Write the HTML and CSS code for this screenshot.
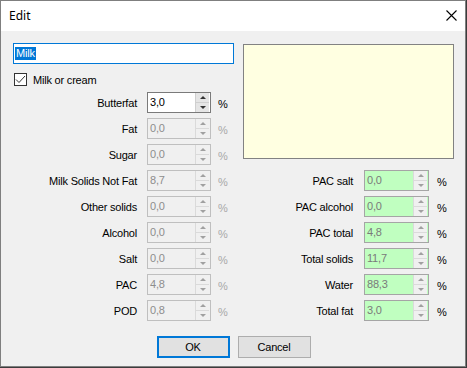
FILE: index.html
```html
<!DOCTYPE html>
<html>
<head>
<meta charset="utf-8">
<link rel="stylesheet" href="styles.css">
</head>
<body>
<div class="window">
  <div class="titlebar">
    <span class="title">Edit</span>
    <svg class="close" width="11" height="11" viewBox="0 0 11 11"><path d="M0.5 0.5 L10.5 10.5 M10.5 0.5 L0.5 10.5" stroke="#000" stroke-width="1.1" fill="none"/></svg>
  </div>
  <div class="content">
    <div class="columns">
      <div class="col-left">
        <div class="name-input"><span class="sel">Milk</span></div>
        <div class="check-row">
          <span class="checkbox"><svg width="11" height="11" viewBox="0 0 11 11"><path d="M1 5.5 L4 8.5 L10 2" stroke="#333" stroke-width="1" fill="none"/></svg></span>
          <span>Milk or cream</span>
        </div>
        <div class="rows">
          <div class="row"><span class="label">Butterfat</span><div class="spin enabled"><span class="val">3,0</span><span class="btns"><span class="up"><i></i></span><span class="down"><i></i></span></span></div><span class="pct">%</span></div>
          <div class="row"><span class="label">Fat</span><div class="spin disabled"><span class="val">0,0</span><span class="btns"><span class="up"><i></i></span><span class="down"><i></i></span></span></div><span class="pct dim">%</span></div>
          <div class="row"><span class="label">Sugar</span><div class="spin disabled"><span class="val">0,0</span><span class="btns"><span class="up"><i></i></span><span class="down"><i></i></span></span></div><span class="pct dim">%</span></div>
          <div class="row"><span class="label">Milk Solids Not Fat</span><div class="spin disabled"><span class="val">8,7</span><span class="btns"><span class="up"><i></i></span><span class="down"><i></i></span></span></div><span class="pct dim">%</span></div>
          <div class="row"><span class="label">Other solids</span><div class="spin disabled"><span class="val">0,0</span><span class="btns"><span class="up"><i></i></span><span class="down"><i></i></span></span></div><span class="pct dim">%</span></div>
          <div class="row"><span class="label">Alcohol</span><div class="spin disabled"><span class="val">0,0</span><span class="btns"><span class="up"><i></i></span><span class="down"><i></i></span></span></div><span class="pct dim">%</span></div>
          <div class="row"><span class="label">Salt</span><div class="spin disabled"><span class="val">0,0</span><span class="btns"><span class="up"><i></i></span><span class="down"><i></i></span></span></div><span class="pct dim">%</span></div>
          <div class="row"><span class="label">PAC</span><div class="spin disabled"><span class="val">4,8</span><span class="btns"><span class="up"><i></i></span><span class="down"><i></i></span></span></div><span class="pct dim">%</span></div>
          <div class="row"><span class="label">POD</span><div class="spin disabled"><span class="val">0,8</span><span class="btns"><span class="up"><i></i></span><span class="down"><i></i></span></span></div><span class="pct dim">%</span></div>
        </div>
      </div>
      <div class="col-right">
        <div class="notes"></div>
        <div class="rows">
          <div class="row"><span class="label">PAC salt</span><div class="spin green"><span class="val">0,0</span><span class="btns"><span class="up"><i></i></span><span class="down"><i></i></span></span></div><span class="pct">%</span></div>
          <div class="row"><span class="label">PAC alcohol</span><div class="spin green"><span class="val">0,0</span><span class="btns"><span class="up"><i></i></span><span class="down"><i></i></span></span></div><span class="pct">%</span></div>
          <div class="row"><span class="label">PAC total</span><div class="spin green"><span class="val">4,8</span><span class="btns"><span class="up"><i></i></span><span class="down"><i></i></span></span></div><span class="pct">%</span></div>
          <div class="row"><span class="label">Total solids</span><div class="spin green"><span class="val">11,7</span><span class="btns"><span class="up"><i></i></span><span class="down"><i></i></span></span></div><span class="pct">%</span></div>
          <div class="row"><span class="label">Water</span><div class="spin green"><span class="val">88,3</span><span class="btns"><span class="up"><i></i></span><span class="down"><i></i></span></span></div><span class="pct">%</span></div>
          <div class="row"><span class="label">Total fat</span><div class="spin green"><span class="val">3,0</span><span class="btns"><span class="up"><i></i></span><span class="down"><i></i></span></span></div><span class="pct">%</span></div>
        </div>
      </div>
    </div>
    <div class="buttons">
      <div class="btn default">OK</div>
      <div class="btn">Cancel</div>
    </div>
  </div>
</div>
</body>
</html>
```

FILE: styles.css
```css
html, body {
  margin: 0;
  padding: 0;
  background: #3c3c3c;
}
body {
  font-family: "Liberation Sans", Arial, sans-serif;
  font-size: 11px;
  letter-spacing: -0.2px;
  color: #000;
}
.window {
  width: 466px;
  height: 367px;
  box-sizing: border-box;
  border: 1px solid #7f7f7f;
  background: #f0f0f0;
  display: flex;
  flex-direction: column;
}
.titlebar {
  height: 30px;
  flex: none;
  background: #fff;
  display: flex;
  align-items: center;
  justify-content: space-between;
  padding: 0 8px 0 8px;
}
.title {
  font-family: "Noto Sans", "Open Sans", sans-serif;
  font-size: 12px;
  letter-spacing: 0;
  margin-top: -1px;
}
.close {
  margin-top: -1px;
}
.content {
  padding: 12px 11px 0 12px;
  display: flex;
  flex-direction: column;
}
.columns {
  display: flex;
  gap: 9px;
}
.col-left {
  width: 221px;
  display: flex;
  flex-direction: column;
}
.col-right {
  width: 211px;
  display: flex;
  flex-direction: column;
}
.name-input {
  height: 21px;
  box-sizing: border-box;
  border: 1px solid #0078d7;
  background: #fff;
  display: flex;
  align-items: center;
  padding-left: 1px;
}
.sel {
  background: #0078d7;
  color: #fff;
  line-height: 13px;
  padding: 0 1px 0 1px;
}
.check-row {
  margin-top: 9px;
  height: 13px;
  display: flex;
  align-items: center;
  gap: 6px;
  padding-left: 1px;
}
.checkbox {
  width: 13px;
  height: 13px;
  box-sizing: border-box;
  border: 1px solid #333;
  background: #fff;
  display: flex;
  align-items: center;
  justify-content: center;
}
.col-left .rows {
  margin-top: 6px;
}
.notes {
  margin-top: 1px;
  height: 115px;
  box-sizing: border-box;
  border: 1px solid #828282;
  background: #ffffe1;
}
.col-right .rows {
  margin-top: 11px;
}
.rows {
  display: flex;
  flex-direction: column;
  gap: 5px;
}
.row {
  height: 21px;
  display: flex;
  align-items: center;
}
.label {
  text-align: right;
  white-space: nowrap;
}
.col-left .label {
  width: 124px;
  margin-right: 10px;
}
.col-right .label {
  width: 110px;
  margin-right: 11px;
}
.spin {
  height: 21px;
  box-sizing: border-box;
  border: 1px solid #7a7a7a;
  display: flex;
  background: #fff;
}
.col-left .spin {
  width: 64px;
}
.col-right .spin {
  width: 65px;
}
.val {
  flex: 1;
  padding-left: 2px;
  line-height: 19px;
}
.btns {
  width: 14px;
  margin: 0 1px 0 0;
  display: flex;
  flex-direction: column;
}
.btns span {
  flex: 1;
  display: flex;
  align-items: center;
  justify-content: center;
  background: #e5e5e5;
  border-left: 1px solid #cfcfcf;
}
.btns .up {
  border-bottom: 1px solid #cfcfcf;
}
.btns .up i {
  width: 0;
  height: 0;
  border-left: 3px solid transparent;
  border-right: 3px solid transparent;
  border-bottom: 3px solid #333;
}
.btns .down i {
  width: 0;
  height: 0;
  border-left: 3px solid transparent;
  border-right: 3px solid transparent;
  border-top: 3px solid #333;
}
.spin.disabled {
  background: #f0f0f0;
  border-color: #bfbfbf;
}
.spin.disabled .val {
  color: #8d8d8d;
}
.spin.disabled .btns span,
.spin.green .btns span {
  background: #f0f0f0;
  border-color: #dadada;
}
.spin.disabled .btns .up i,
.spin.green .btns .up i {
  border-bottom-color: #a0a0a0;
}
.spin.disabled .btns .down i,
.spin.green .btns .down i {
  border-top-color: #a0a0a0;
}
.spin.green {
  background: #c0ffc0;
  border-color: #a5a5a5;
}
.spin.green .val {
  color: #7a7a7a;
}
.pct {
  margin-left: 7px;
  margin-top: 2px;
}
.col-right .pct {
  margin-left: 8px;
}
.pct.dim {
  color: #a8a8a8;
}
.buttons {
  margin-top: 15px;
  display: flex;
  justify-content: center;
  gap: 8px;
}
.btn {
  width: 73px;
  height: 22px;
  box-sizing: border-box;
  border: 1px solid #adadad;
  background: #e1e1e1;
  display: flex;
  align-items: center;
  justify-content: center;
}
.btn.default {
  border: 2px solid #0078d7;
}
```
